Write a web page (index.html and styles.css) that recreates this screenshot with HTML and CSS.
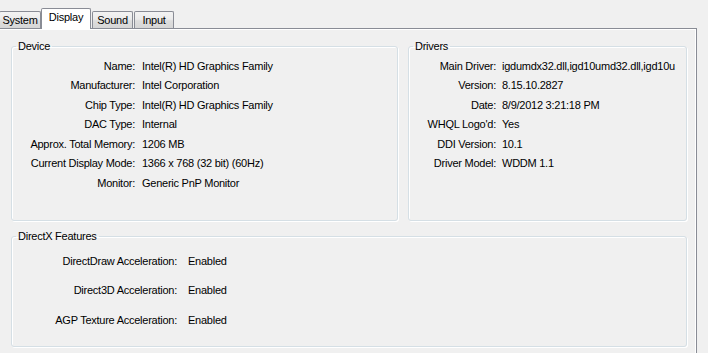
FILE: index.html
```html
<!DOCTYPE html>
<html>
<head>
<meta charset="utf-8">
<link rel="stylesheet" href="styles.css">
</head>
<body>
<div class="tabs">
  <div class="tab first">System</div>
  <div class="tab active">Display</div>
  <div class="tab">Sound</div>
  <div class="tab">Input</div>
</div>
<div class="page">
  <div class="top-row">
    <fieldset class="group device">
      <legend>Device</legend>
      <div class="grid">
        <span class="lbl">Name:</span><span class="val">Intel(R) HD Graphics Family</span>
        <span class="lbl">Manufacturer:</span><span class="val">Intel Corporation</span>
        <span class="lbl">Chip Type:</span><span class="val">Intel(R) HD Graphics Family</span>
        <span class="lbl">DAC Type:</span><span class="val">Internal</span>
        <span class="lbl">Approx. Total Memory:</span><span class="val">1206 MB</span>
        <span class="lbl">Current Display Mode:</span><span class="val">1366 x 768 (32 bit) (60Hz)</span>
        <span class="lbl">Monitor:</span><span class="val">Generic PnP Monitor</span>
      </div>
    </fieldset>
    <fieldset class="group drivers">
      <legend>Drivers</legend>
      <div class="grid">
        <span class="lbl">Main Driver:</span><span class="val">igdumdx32.dll,igd10umd32.dll,igd10u</span>
        <span class="lbl">Version:</span><span class="val">8.15.10.2827</span>
        <span class="lbl">Date:</span><span class="val">8/9/2012 3:21:18 PM</span>
        <span class="lbl">WHQL Logo'd:</span><span class="val">Yes</span>
        <span class="lbl">DDI Version:</span><span class="val">10.1</span>
        <span class="lbl">Driver Model:</span><span class="val">WDDM 1.1</span>
      </div>
    </fieldset>
  </div>
  <fieldset class="group directx">
    <legend>DirectX Features</legend>
    <div class="grid">
      <span class="lbl">DirectDraw Acceleration:</span><span class="val">Enabled</span>
      <span class="lbl">Direct3D Acceleration:</span><span class="val">Enabled</span>
      <span class="lbl">AGP Texture Acceleration:</span><span class="val">Enabled</span>
    </div>
  </fieldset>
</div>
</body>
</html>
```
FILE: styles.css
```css
html, body {
  margin: 0;
  padding: 0;
  background: #f0f0f0;
}
body {
  font-family: "Liberation Sans", Arial, sans-serif;
  font-size: 11px;
  letter-spacing: -0.25px;
  color: #000;
  width: 708px;
  height: 353px;
  overflow: hidden;
}
.tabs {
  display: flex;
  align-items: flex-end;
  height: 28px;
}
.tab {
  box-sizing: border-box;
  height: 17px;
  border: 1px solid #898c95;
  border-bottom: none;
  border-radius: 2px 2px 0 0;
  background: linear-gradient(#f3f3f3, #ebebeb 45%, #dddddd 55%, #d6d6d6);
  text-align: center;
  line-height: 16px;
  width: 41px;
  margin-right: 1px;
}
.tab.first {
  margin-left: -1px;
  width: 42px;
  margin-right: 0;
}
.tab.active {
  position: relative;
  z-index: 1;
  height: 21px;
  margin-bottom: -1px;
  width: 50px;
  background: #fff;
  line-height: 16px;
  padding-bottom: 4px;
}
.tab:last-child {
  width: 40px;
}
.page {
  box-sizing: border-box;
  width: 697px;
  height: 325px;
  border-top: 1px solid #898c95;
  border-right: 1px solid #898c95;
  box-shadow: inset 0 1px #fff, inset -1px 0 #fff;
  padding: 11px 0 0 11px;
}
.top-row {
  display: flex;
  gap: 10px;
}
.group {
  margin: 0;
  padding: 0;
  min-width: 0;
  box-sizing: border-box;
  border: 1px solid #d5dfe5;
  border-radius: 3px;
  box-shadow: inset 1px 1px #fff, 1px 1px #fff;
}
.group legend {
  padding: 0 2px;
  margin-left: 4px;
  line-height: 13px;
}
.grid {
  display: grid;
  grid-auto-rows: 19.5px;
  align-items: center;
  padding-top: 3px;
  white-space: nowrap;
}
.lbl {
  text-align: right;
}
.device {
  width: 387px;
  height: 181px;
}
.device .grid {
  grid-template-columns: 123px 1fr;
  column-gap: 7px;
}
.drivers {
  width: 279px;
  height: 181px;
}
.drivers .grid {
  grid-template-columns: 87px 1fr;
  column-gap: 6px;
}
.directx {
  width: 676px;
  height: 117px;
  margin-top: 9px;
}
.directx .grid {
  grid-template-columns: 165px 1fr;
  column-gap: 11px;
  grid-auto-rows: 29.5px;
  padding-top: 3px;
}
```
